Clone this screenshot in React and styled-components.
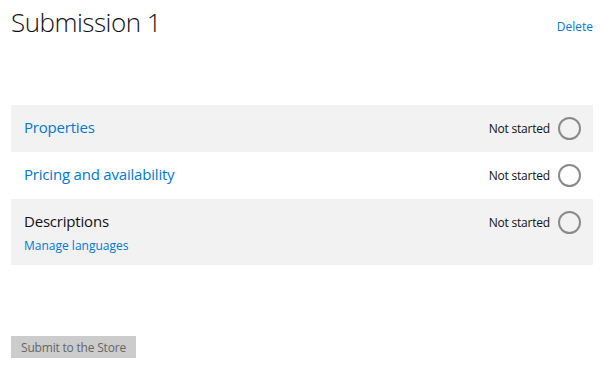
import React from "react";
import styled, { createGlobalStyle } from "styled-components";

const GlobalStyle = createGlobalStyle`
  body {
    margin: 0;
    background: #fff;
    font-family: "Open Sans", "Noto Sans", sans-serif;
  }
`;

const Page = styled.div`
  width: 600px;
  height: 373px;
  box-sizing: border-box;
  padding: 0 7px 0 11px;
  display: flex;
  flex-direction: column;
`;

const Header = styled.div`
  display: flex;
  justify-content: space-between;
  align-items: flex-start;
  height: 105px;
`;

const Title = styled.h1`
  margin: 4px 0 0;
  font-size: 26px;
  font-weight: 300;
  color: #111;
  letter-spacing: -0.5px;
`;

const Link = styled.a`
  color: #0078d7;
  font-size: ${(p) => p.size || 12}px;
  text-decoration: none;
  cursor: pointer;
`;

const DeleteLink = styled(Link)`
  margin-top: 18px;
`;

const List = styled.div`
  display: flex;
  flex-direction: column;
`;

const Row = styled.div`
  display: flex;
  justify-content: space-between;
  align-items: flex-start;
  background: ${(p) => (p.shaded ? "#f2f2f2" : "#fff")};
  padding: ${(p) => (p.tall ? "11px 12px 11px 13px" : "11px 12px 0 13px")};
  height: ${(p) => (p.tall ? "66px" : "47px")};
  box-sizing: border-box;
`;

const Left = styled.div`
  display: flex;
  flex-direction: column;
  gap: 5px;
`;

const RowTitle = styled.span`
  font-size: 15px;
  line-height: 22px;
  letter-spacing: -0.2px;
  color: ${(p) => (p.link ? "#0078d7" : "#111")};
`;

const Status = styled.div`
  display: flex;
  align-items: center;
  gap: 8px;
  font-size: 12px;
  color: #111;
  letter-spacing: -0.2px;
  margin-top: 1px;
`;

const Circle = styled.span`
  width: 19px;
  height: 19px;
  border: 2px solid #8a8a8a;
  border-radius: 50%;
`;

const Footer = styled.div`
  display: flex;
  margin-top: 71px;
`;

const SubmitButton = styled.button`
  border: none;
  background: #cccccc;
  color: #666;
  font-family: inherit;
  font-size: 12px;
  height: 22px;
  width: 125px;
  padding: 0;
  letter-spacing: -0.2px;
`;

const rows = [
  { title: "Properties", link: true, shaded: true },
  { title: "Pricing and availability", link: true },
  { title: "Descriptions", shaded: true, sub: "Manage languages" },
];

export default function App() {
  return (
    <Page>
      <GlobalStyle />
      <Header>
        <Title>Submission 1</Title>
        <DeleteLink>Delete</DeleteLink>
      </Header>
      <List>
        {rows.map((r) => (
          <Row key={r.title} shaded={r.shaded} tall={!!r.sub}>
            <Left>
              <RowTitle link={r.link}>{r.title}</RowTitle>
              {r.sub && <Link size={12}>{r.sub}</Link>}
            </Left>
            <Status>
              Not started
              <Circle />
            </Status>
          </Row>
        ))}
      </List>
      <Footer>
        <SubmitButton>Submit to the Store</SubmitButton>
      </Footer>
    </Page>
  );
}
